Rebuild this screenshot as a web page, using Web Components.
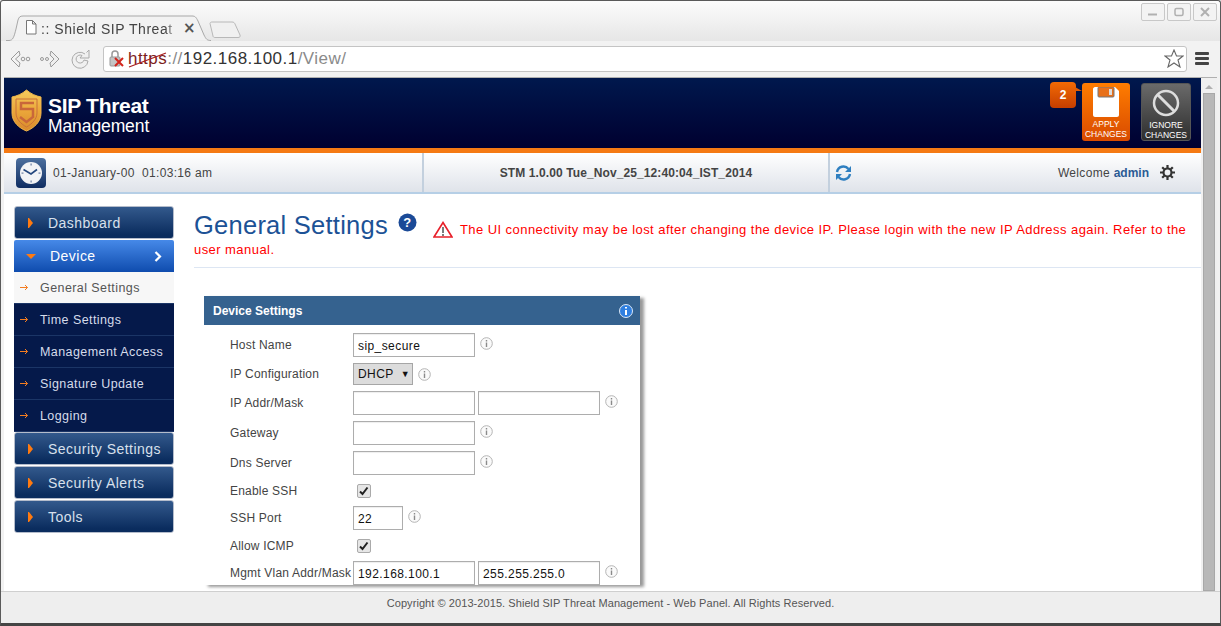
<!DOCTYPE html>
<html>
<head>
<meta charset="utf-8">
<title>Shield SIP Threat Management</title>
<style>
  html, body { margin: 0; height: 100%; overflow: hidden; background: #f2f2f2; }
  body { font-family: "Liberation Sans", Arial, sans-serif; }
</style>
</head>
<body>
<browser-window>
  <app-header></app-header>
  <status-bar></status-bar>
  <div slot="sidebar">
    <nav-item>Dashboard</nav-item>
    <nav-item active>Device</nav-item>
    <sub-item current>General Settings</sub-item>
    <sub-item>Time Settings</sub-item>
    <sub-item>Management Access</sub-item>
    <sub-item>Signature Update</sub-item>
    <sub-item>Logging</sub-item>
    <nav-item>Security Settings</nav-item>
    <nav-item>Security Alerts</nav-item>
    <nav-item>Tools</nav-item>
  </div>
  <page-title slot="main"></page-title>
  <settings-panel slot="main" title="Device Settings">
    <form-row label="Host Name" h="24"><text-box>sip_secure</text-box><info-icon></info-icon></form-row>
    <form-row label="IP Configuration" h="22"><select-box>DHCP</select-box><info-icon low></info-icon></form-row>
    <form-row label="IP Addr/Mask" h="24"><text-box></text-box><text-box></text-box><info-icon></info-icon></form-row>
    <form-row label="Gateway" h="24"><text-box></text-box><info-icon></info-icon></form-row>
    <form-row label="Dns Server" h="24"><text-box></text-box><info-icon></info-icon></form-row>
    <form-row label="Enable SSH" h="19"><check-box></check-box></form-row>
    <form-row label="SSH Port" h="24"><text-box small>22</text-box><info-icon></info-icon></form-row>
    <form-row label="Allow ICMP" h="19"><check-box></check-box></form-row>
    <form-row label="Mgmt Vlan Addr/Mask" h="24"><text-box>192.168.100.1</text-box><text-box>255.255.255.0</text-box><info-icon></info-icon></form-row>
  </settings-panel>
  <span slot="footer">Copyright © 2013-2015. Shield SIP Threat Management - Web Panel. All Rights Reserved.</span>
</browser-window>

<script>
function shadow(el, html) {
  el.attachShadow({mode: 'open'}).innerHTML = html;
}

class BrowserWindow extends HTMLElement {
  constructor() {
    super();
    shadow(this, `
    <style>
      :host { display: flex; flex-direction: column; height: 626px; box-sizing: border-box; border: 1px solid #5a5a5a; border-bottom: 3px solid #444;
        border-radius: 3px 3px 0 0; background: linear-gradient(#fcfcfc, #e6e6e6 40px, #f2f2f2 40px); font-family: "Liberation Sans", Arial, sans-serif; }
      .top { height: 39px; flex: none; position: relative; display: flex; }
      .tabs { position: absolute; left: 5px; top: 14px; display: flex; }
      .tab { position: relative; width: 206px; height: 26px; }
      .tab svg { position: absolute; left: 0; top: 0; }
      .tab span { position: absolute; left: 35px; top: 6px; width: 137px; overflow: hidden; white-space: nowrap; font-size: 14px; letter-spacing: .54px; color: #444;
        -webkit-mask-image: linear-gradient(90deg, #000 125px, transparent); }
      .tab b { position: absolute; left: 177px; top: 4px; font: bold 15px "DejaVu Sans", sans-serif; color: #555; }
      .tab .doc { left: 19px; top: 5px; }
      .new { margin-left: -3px; margin-top: 6px; }
      .controls { margin-left: auto; margin-right: 3px; margin-top: 2px; display: flex; gap: 2px; }
      .controls div { width: 22px; height: 16px; border: 1px solid #c8c8c8; border-radius: 2px; display: flex; align-items: center; justify-content: center; background: #f3f3f3; }
      .toolbar { height: 38px; flex: none; box-sizing: border-box; padding: 6px 16px 6px 5px; display: flex; align-items: center; border-bottom: 1px solid #b0b0b0; margin: 0 3px; }
      .nav { display: flex; width: 94px; gap: 8px; flex: none; align-items: center; }
      .omni { flex: 1; height: 26px; box-sizing: border-box; border: 1px solid #c4c4c4; border-radius: 3px; background: #fff; display: flex; align-items: center; padding-left: 5px; position: relative; }
      .url { margin-left: 3px; font-size: 17px; letter-spacing: .47px; color: #8a8a8a; white-space: nowrap; }
      .url s { color: #7c1d1d; text-decoration: none; }
      .url i { font-style: normal; color: #333; }
      .strike { position: absolute; left: 24px; top: 3px; }
      .star { margin-left: auto; margin-right: 2px; }
      .menu { width: 14px; margin-left: 8px; margin-right: -8px; display: flex; flex-direction: column; gap: 2px; flex: none; }
      .menu div { height: 3px; background: #444; border-radius: 1px; }
      .view { flex: 1; min-height: 0; display: flex; margin: 0 3px; border-top: 0; }
      .page { flex: 1; min-width: 0; display: flex; flex-direction: column; background: #fff; }
      .body { flex: 1; min-height: 0; display: flex; overflow: hidden; }
      .side { width: 160px; flex: none; margin-left: 10px; padding-top: 12px; display: flex; flex-direction: column; }
      .main { flex: 1; min-width: 0; padding-left: 20px; }
      .scroll { width: 16px; flex: none; background: #f0f0f0; position: relative; display: flex; flex-direction: column; align-items: center; }
      .scroll svg { margin-top: 6px; }
      .thumb { width: 12px; flex: 1; margin-top: 3px; background: #b8b8b8; border: 1px solid #a8a8a8; box-sizing: border-box; }
      .foot { height: 32px; flex: none; box-sizing: border-box; border-top: 1px solid #cfcfcf; background: #eeeeee; text-align: center; font-size: 11px; letter-spacing: .07px; color: #555; padding-top: 5px; }
    </style>
    <div class="top">
      <div class="tabs">
        <div class="tab">
          <svg width="206" height="26"><path d="M0 25.5H3C7 25.5 8 22 10 14L12 5C13 2 14 1 17 1H186C189 1 190 2 192 6L198 20C200 24 201 25.5 205 25.5" fill="#f2f2f2" stroke="#a8a8a8"/></svg>
          <svg class="doc" width="12" height="15"><path d="M1.5 .5H7.5L11 4V14H1.5Z M7.5 .5V4H11" fill="#fff" stroke="#777"/></svg>
          <span>:: Shield SIP Threat Management</span>
          <b>×</b>
        </div>
        <svg class="new" width="33" height="18"><path d="M1 2.5C1 1.5 2 1 3 1H23C25 1 25.5 2 26 3L31 14C31.5 15.5 31 16.5 29 16.5H6C5 16.5 4 16 4 15Z" fill="#f0f0f0" stroke="#b8b8b8"/></svg>
      </div>
      <div class="controls">
        <div><svg width="12" height="10"><path d="M1 7.5H10" stroke="#b0b0b0" stroke-width="2"/></svg></div>
        <div><svg width="12" height="10"><rect x="2" y="1.5" width="8" height="7" rx="1.5" fill="none" stroke="#b0b0b0" stroke-width="1.5"/></svg></div>
        <div><svg width="12" height="10"><path d="M2 1L10 9M10 1L2 9" stroke="#b0b0b0" stroke-width="2"/></svg></div>
      </div>
    </div>
    <div class="toolbar">
      <div class="nav">
        <svg width="22" height="20" viewBox="0 0 22 20"><path d="M10 2L2 10L10 18L11 14L6.500 10L11 6Z" fill="#f4f4f4" stroke="#999"/><circle cx="14" cy="10" r="1.800" fill="none" stroke="#999"/><circle cx="19" cy="10" r="1.800" fill="none" stroke="#999"/></svg>
        <svg width="22" height="20" viewBox="0 0 22 20"><circle cx="3" cy="10" r="1.500" fill="none" stroke="#999"/><circle cx="8" cy="10" r="1.500" fill="none" stroke="#999"/><path d="M12 2L20 10L12 18L11 14L15 10L11 6Z" fill="#eee" stroke="#999"/></svg>
        <svg width="22" height="22" viewBox="0 0 22 22"><path d="M16 6A8 8 0 1 0 19 13L15 12A4 4 0 1 1 13 7.500L11 10H20V2L17.500 4.500" fill="#f0f0f0" stroke="#aaa"/></svg>
      </div>
      <div class="omni">
        <svg width="16" height="18" viewBox="0 0 16 18"><rect x="1" y="7" width="10" height="9" rx="1" fill="#c4c4c4" stroke="#999"/><path d="M3 7V4A3 3 0 0 1 9 4V7" fill="none" stroke="#999" stroke-width="1.500"/><path d="M6 8L14 16M14 8L6 16" stroke="#d3251c" stroke-width="2"/></svg>
        <span class="url"><s>https</s>://<i>192.168.100.1</i>/View/</span>
        <svg class="strike" width="40" height="20"><path d="M1 17L38 3" stroke="#a81e1e" stroke-width="1.200"/></svg>
        <svg class="star" width="20" height="19" viewBox="0 0 20 19"><path d="M10 1L12.500 7H19L14 11L16 18L10 14L4 18L6 11L1 7H7.500Z" fill="#fff" stroke="#666" stroke-width="1.100"/></svg>
      </div>
      <div class="menu"><div></div><div></div><div></div></div>
    </div>
    <div class="view">
      <div class="page">
        <slot></slot>
        <div class="body">
          <div class="side"><slot name="sidebar"></slot></div>
          <div class="main"><slot name="main"></slot></div>
        </div>
      </div>
      <div class="scroll">
        <svg width="10" height="6"><path d="M1 5L5 1L9 5Z" fill="#b0b0b0"/></svg>
        <div class="thumb"></div>
      </div>
    </div>
    <div class="foot"><slot name="footer"></slot></div>
    `);
  }
}

class AppHeader extends HTMLElement {
  constructor() {
    super();
    shadow(this, `
    <style>
      :host { display: flex; height: 75px; box-sizing: border-box; border-bottom: 5px solid #f57a14; background: linear-gradient(#00184d, #000030); position: relative; }
      .logo { display: flex; margin-left: 7px; margin-top: 11px; }
      .name { margin-left: 6px; color: #fff; margin-top: 6px; }
      .name b { display: block; font-size: 21px; line-height: 22px; letter-spacing: -.3px; }
      .name span { display: block; font-size: 17.500px; line-height: 19px; letter-spacing: -.1px; }
      .actions { margin-left: auto; margin-right: 10px; margin-top: 5px; display: flex; gap: 11px; }
      .btn { box-sizing: border-box; height: 58px; border-radius: 3px; color: #fff; font-size: 8.500px; line-height: 10px; text-align: center; display: flex; flex-direction: column; align-items: center; padding-top: 4px; }
      .btn svg { flex: none; height: 30px; margin-bottom: 2px; }
      .apply { width: 48px; background: linear-gradient(#ff7d00, #d84a00); }
      .ignore { width: 50px; background: linear-gradient(#6a6a6a, #2e2e2e); border: 1px solid #555; }
      .badge { position: absolute; right: 125px; top: 4px; width: 26px; height: 26px; border-radius: 4px; background: linear-gradient(#f26a04, #c53e00); color: #fff; font-weight: bold; font-size: 12px; display: flex; align-items: center; justify-content: center; }
      .badge::after { content: ""; position: absolute; right: -6px; top: 5px; border-left: 7px solid #e35b02; border-top: 4px solid transparent; border-bottom: 0 solid transparent; }
    </style>
    <div class="logo">
      <svg width="31" height="43" viewBox="0 0 31 43">
        <defs><linearGradient id="s" x1="0" y1="0" x2="0" y2="1"><stop offset="0" stop-color="#f6cc5e"/><stop offset=".5" stop-color="#eba73a"/><stop offset="1" stop-color="#d98a2c"/></linearGradient></defs>
        <path d="M15.500 1C20 5 25 7 30 8V24C30 33 23 39 15.500 42C8 39 1 33 1 24V8C6 7 11 5 15.500 1Z" fill="url(#s)" stroke="#f0b64c"/>
        <path d="M5 10H26V24C26 30 21 35 15.500 38C10 35 5 30 5 24Z" fill="none" stroke="#c9703a" stroke-width="1"/>
        <path d="M23 14H10V20H22V28L15.500 33L9 28" fill="none" stroke="#c9673a" stroke-width="2.500"/>
      </svg>
      <div class="name"><b>SIP Threat</b><span>Management</span></div>
    </div>
    <div class="actions">
      <div class="btn apply">
        <svg width="27" height="30" viewBox="0 0 27 30"><path d="M2 0H22L26 4V28C26 29 25 30 24 30H2C1 30 0 29 0 28V2C0 1 1 0 2 0Z" fill="#fff"/><rect x="5" y="0" width="16" height="10" rx="1" fill="#e8701a" stroke="#777"/><rect x="16" y="2" width="3" height="6" fill="#ddd"/></svg>
        <span>APPLY<br>CHANGES</span>
      </div>
      <div class="btn ignore">
        <svg width="28" height="30" viewBox="0 0 28 30"><circle cx="14" cy="15" r="12" fill="none" stroke="#ddd" stroke-width="2.500"/><path d="M6 7L22 23" stroke="#ddd" stroke-width="3"/></svg>
        <span>IGNORE<br>CHANGES</span>
      </div>
    </div>
    <div class="badge">2</div>
    `);
  }
}

class StatusBar extends HTMLElement {
  constructor() {
    super();
    shadow(this, `
    <style>
      :host { display: flex; height: 41px; box-sizing: border-box; border-bottom: 2px solid #b6cfe6; background: linear-gradient(#fff, #dfe3ea); font-size: 12px; color: #444; letter-spacing: .33px; align-items: stretch; }
      .a { width: 420px; flex: none; box-sizing: border-box; padding-left: 12px; display: flex; align-items: center; gap: 7px; border-right: 2px solid #c3d0de; }
      .b { width: 406px; flex: none; box-sizing: border-box; display: flex; align-items: center; justify-content: center; font-weight: bold; letter-spacing: .1px; border-right: 2px solid #c3d0de; }
      .c { flex: 1; display: flex; align-items: center; padding: 0 26px 0 5px; }
      .who { margin-left: auto; margin-right: 11px; }
      .who b { color: #2b5b94; letter-spacing: 0; }
      .clock { width: 30px; height: 30px; }
    </style>
    <div class="a">
      <svg class="clock" viewBox="0 0 30 30">
        <defs><linearGradient id="c" x1="0" y1="0" x2="0" y2="1"><stop offset="0" stop-color="#4c6f9e"/><stop offset="1" stop-color="#0f2d62"/></linearGradient></defs>
        <rect width="30" height="30" rx="4" fill="url(#c)"/>
        <circle cx="15" cy="15" r="11" fill="#f2f3f6"/>
        <g fill="#6b7fa3"><rect x="14.500" y="5.500" width="1.200" height="2"/><rect x="14.500" y="22.500" width="1.200" height="2"/><rect x="5.500" y="14.500" width="2" height="1.200"/><rect x="22.500" y="14.500" width="2" height="1.200"/></g>
        <path d="M7.500 11.500L15 16L21 11.500" fill="none" stroke="#24477e" stroke-width="1.600"/>
      </svg>
      <span>01-January-00&nbsp; 01:03:16 am</span>
    </div>
    <div class="b">STM 1.0.00 Tue_Nov_25_12:40:04_IST_2014</div>
    <div class="c">
      <svg width="17" height="16" viewBox="0 0 17 16"><path d="M2 7A6.500 6.500 0 0 1 13.500 4M15 9A6.500 6.500 0 0 1 3.500 12" fill="none" stroke="#2f7fc0" stroke-width="2.400"/><path d="M16 1V7H10ZM1 15V9H7Z" fill="#2f7fc0"/></svg>
      <span class="who">Welcome <b>admin</b></span>
      <svg width="15" height="15" viewBox="0 0 15 15"><circle cx="7.500" cy="7.500" r="4" fill="none" stroke="#333" stroke-width="2.200"/><path d="M7.500 0V3M7.500 12V15M0 7.500H3M12 7.500H15M2.200 2.200L4.300 4.300M10.700 10.700L12.800 12.800M12.800 2.200L10.700 4.300M4.300 10.700L2.200 12.800" stroke="#333" stroke-width="2.200"/></svg>
    </div>
    `);
  }
}

class NavItem extends HTMLElement {
  constructor() {
    super();
    shadow(this, `
    <style>
      :host { display: flex; align-items: center; height: 33px; box-sizing: border-box; margin-bottom: 1px; padding-left: 11px; position: relative; color: #d8e0ec; font-size: 14px; letter-spacing: .47px;
        border: 1px solid #b4bccb; border-radius: 3px; background: linear-gradient(#33598c, #0a2c5e 90%); }
      :host([active]) { border: 0; border-radius: 2px 2px 0 0; background: linear-gradient(#4689e8, #0f4cae); color: #fff; height: 32px; margin-bottom: 0; padding-left: 12px; }
      .m { width: 0; height: 0; border-left: 4px solid #ff7a10; border-top: 5px solid transparent; border-bottom: 5px solid transparent; margin-right: 15px; margin-left: 3px; box-shadow: -1px 0 0 #ff7a10; }
      :host([active]) .m { border-top: 5px solid #ff7a10; border-left: 5px solid transparent; border-right: 5px solid transparent; border-bottom: 0; box-shadow: none; margin-left: 0; margin-right: 11px; margin-right: 14px; }
      .ch { display: none; position: absolute; right: 12px; top: 11px; }
      :host([active]) .ch { display: block; }
    </style>
    <span class="m"></span><slot></slot>
    <svg class="ch" width="8" height="11"><path d="M1.500 1L6 5.500L1.500 10" fill="none" stroke="#fff" stroke-width="2.200"/></svg>
    `);
  }
}

class SubItem extends HTMLElement {
  constructor() {
    super();
    shadow(this, `
    <style>
      :host { display: flex; align-items: center; height: 32px; box-sizing: border-box; padding-left: 6px; border-bottom: 1px solid #1b3566; background: #05194a; color: #d6dcea; font-size: 12.500px; letter-spacing: .42px; }
      :host([current]) { background: #f7f7f7; color: #555; }
      svg { margin-right: 11px; flex: none; }
    </style>
    <svg width="9" height="7"><path d="M0 3.500H7.500M5 1L7.500 3.500L5 6" fill="none" stroke="#f47d20"/></svg><slot></slot>
    `);
  }
}

class PageTitle extends HTMLElement {
  constructor() {
    super();
    shadow(this, `
    <style>
      :host { display: block; box-sizing: border-box; height: 74px; border-bottom: 1px solid #dde6f3; padding-top: 19px; color: #f00; font-size: 13px; letter-spacing: .44px; line-height: 20px; }
      h1 { display: inline; margin: 0; font-weight: normal; font-size: 25.500px; color: #1c5296; letter-spacing: .25px; }
      .q { vertical-align: 2px; margin: 0 6px 0 6px; }
      .w { vertical-align: -4px; margin: 0 3px 0 6px; }
    </style>
    <h1>General Settings</h1>
    <svg class="q" width="19" height="19" viewBox="0 0 19 19"><circle cx="9.500" cy="9.500" r="9" fill="#1b4a97"/><text x="9.500" y="14" text-anchor="middle" font-family="Liberation Sans" font-weight="bold" font-size="13" fill="#fff">?</text></svg>
    <svg class="w" width="20" height="17" viewBox="0 0 20 17"><path d="M10 1.500L19 16H1Z" fill="#fff" stroke="#e8202a" stroke-width="1.600"/><path d="M10 6V12M10 13V15" stroke="#444" stroke-width="1.400"/></svg>
    <span>The UI connectivity may be lost after changing the device IP. Please login with the new IP Address again. Refer to the user manual.</span>
    `);
  }
}

class SettingsPanel extends HTMLElement {
  connectedCallback() {
    if (this.shadowRoot) return;
    shadow(this, `
    <style>
      :host { display: block; width: 436px; margin: 28px 0 0 10px; box-shadow: 4px 2px 3px #999; background: #fff; }
      header { height: 29px; box-sizing: border-box; background: #35628f; color: #fff; font-weight: bold; font-size: 12px; display: flex; align-items: center; padding: 0 7px 0 9px; justify-content: space-between; }
      .rows { padding: 8px 0 0 26px; display: flex; flex-direction: column; gap: 6px; }
    </style>
    <header><span>${this.getAttribute('title')}</span>
      <svg width="14" height="14" viewBox="0 0 14 14"><circle cx="7" cy="7" r="6.500" fill="#2f7fe0" stroke="#dbe7f5"/><path d="M7 3V4.500M7 6V11" stroke="#fff" stroke-width="2"/></svg>
    </header>
    <div class="rows"><slot></slot></div>
    `);
  }
}

class FormRow extends HTMLElement {
  connectedCallback() {
    if (this.shadowRoot) return;
    shadow(this, `
    <style>
      :host { display: flex; align-items: center; height: ${this.getAttribute('h')}px; font-size: 12px; color: #444; letter-spacing: .2px; }
      label { width: 123px; flex: none; white-space: nowrap; }
      .f { display: flex; align-items: center; gap: 3px; }
    </style>
    <label>${this.getAttribute('label')}</label><div class="f"><slot></slot></div>
    `);
  }
}

class TextBox extends HTMLElement {
  constructor() {
    super();
    shadow(this, `
    <style>
      :host { display: flex; align-items: center; width: 122px; height: 24px; box-sizing: border-box; border: 1px solid #adadad; padding: 1px 4px 0; font-size: 12px; letter-spacing: .42px; color: #111; background: #fff; box-shadow: inset 0 1px 1px #eee; }
      :host([small]) { width: 50px; }
    </style>
    <slot></slot>
    `);
  }
}

class SelectBox extends HTMLElement {
  constructor() {
    super();
    shadow(this, `
    <style>
      :host { display: flex; align-items: center; width: 60px; height: 22px; box-sizing: border-box; border: 1px solid #a6a6a6; background: #dcdcdc; padding-left: 4px; font-size: 12px; letter-spacing: .42px; color: #111; }
      i { font-style: normal; font-size: 9px; margin-left: 7px; }
    </style>
    <slot></slot><i>▼</i>
    `);
  }
}

class CheckBox extends HTMLElement {
  constructor() {
    super();
    shadow(this, `
    <style>
      :host { display: block; width: 12px; height: 12px; margin-left: 4px; border: 1px solid #aaa; border-radius: 2px; background: #e6e6e6; }
      svg { display: block; }
    </style>
    <svg width="12" height="12"><path d="M2 6.500L4.500 9L9.500 2.500" fill="none" stroke="#222" stroke-width="2"/></svg>
    `);
  }
}

class InfoIcon extends HTMLElement {
  constructor() {
    super();
    shadow(this, `
    <style>
      :host { display: block; width: 13px; height: 13px; margin: -4px 0 0 2px; }
      :host([low]) { margin-top: 0; }
    </style>
    <svg width="13" height="13" viewBox="0 0 13 13"><circle cx="6.500" cy="6.500" r="5.800" fill="#fafafa" stroke="#b4b4b4"/><path d="M6.500 3V4.500M6.500 5.500V10" stroke="#8a8a8a" stroke-width="1.400"/></svg>
    `);
  }
}

customElements.define('browser-window', BrowserWindow);
customElements.define('app-header', AppHeader);
customElements.define('status-bar', StatusBar);
customElements.define('nav-item', NavItem);
customElements.define('sub-item', SubItem);
customElements.define('page-title', PageTitle);
customElements.define('settings-panel', SettingsPanel);
customElements.define('form-row', FormRow);
customElements.define('text-box', TextBox);
customElements.define('select-box', SelectBox);
customElements.define('check-box', CheckBox);
customElements.define('info-icon', InfoIcon);
</script>
</body>
</html>
